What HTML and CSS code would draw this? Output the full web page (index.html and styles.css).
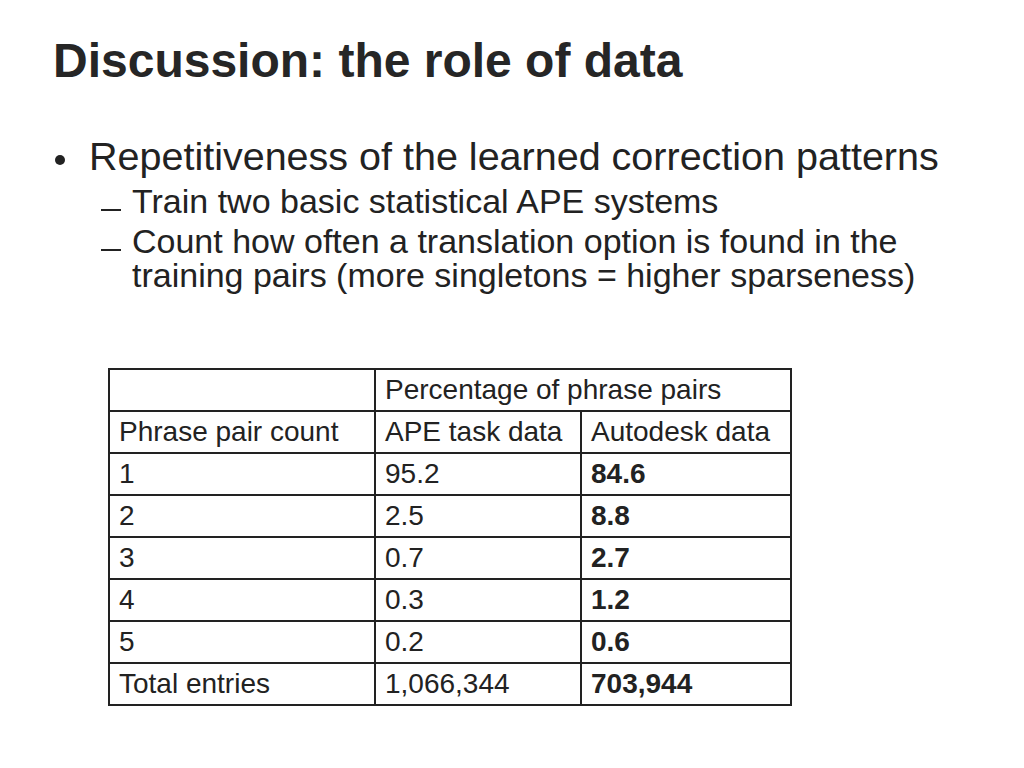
FILE: index.html
```html
<!DOCTYPE html>
<html>
<head>
<meta charset="utf-8">
<link rel="stylesheet" href="styles.css">
</head>
<body>
<div class="slide">
  <h1 class="title">Discussion: the role of data</h1>
  <ul class="bullets">
    <li class="item">
      <span class="dot"></span>
      <div class="item-body">
        <div class="item-text">Repetitiveness of the learned correction patterns</div>
        <ul class="subs">
          <li class="sub"><span class="dash"></span><span class="sub-text">Train two basic statistical APE systems</span></li>
          <li class="sub"><span class="dash"></span><span class="sub-text">Count how often a translation option is found in the training pairs (more singletons = higher sparseness)</span></li>
        </ul>
      </div>
    </li>
  </ul>
  <table class="data">
    <tr><td></td><td colspan="2">Percentage of phrase pairs</td></tr>
    <tr><td class="c1">Phrase pair count</td><td class="c2">APE task data</td><td class="c3">Autodesk data</td></tr>
    <tr><td>1</td><td>95.2</td><td class="b">84.6</td></tr>
    <tr><td>2</td><td>2.5</td><td class="b">8.8</td></tr>
    <tr><td>3</td><td>0.7</td><td class="b">2.7</td></tr>
    <tr><td>4</td><td>0.3</td><td class="b">1.2</td></tr>
    <tr><td>5</td><td>0.2</td><td class="b">0.6</td></tr>
    <tr><td>Total entries</td><td>1,066,344</td><td class="b">703,944</td></tr>
  </table>
</div>
</body>
</html>
```

FILE: styles.css
```css
html, body {
  margin: 0;
  padding: 0;
  background: #fff;
}
.slide {
  width: 1024px;
  height: 768px;
  box-sizing: border-box;
  padding: 33px 0 0 53px;
  font-family: "Liberation Sans", Arial, sans-serif;
  color: #222;
}
.title {
  margin: 0;
  font-size: 48px;
  font-weight: bold;
  line-height: 56px;
  color: #262626;
  white-space: nowrap;
}
.bullets {
  list-style: none;
  margin: 45px 0 0 0;
  padding: 0;
}
.item {
  display: flex;
}
.dot {
  flex: none;
  width: 10px;
  height: 10px;
  border-radius: 50%;
  background: #222;
  margin: 21px 24px 0 2px;
}
.item-text {
  font-size: 39.5px;
  line-height: 44px;
  white-space: nowrap;
}
.subs {
  list-style: none;
  margin: 0;
  padding: 0 0 0 12px;
}
.sub {
  display: flex;
  font-size: 34px;
  line-height: 34px;
  margin-top: 6px;
}
.dash {
  flex: none;
  width: 20px;
  height: 2px;
  background: #222;
  margin: 25px 11px 0 0;
}
.sub-text {
  width: 830px;
}
.data {
  border-collapse: collapse;
  margin: 76px 0 0 55px;
  font-size: 28px;
}
.data td {
  box-sizing: border-box;
  border: 2px solid #222;
  height: 42px;
  padding: 0 9px;
  line-height: 30px;
  vertical-align: middle;
  white-space: nowrap;
}
.data .c1 { width: 266px; }
.data .c2 { width: 206px; }
.data .c3 { width: 210px; }
.data .b { font-weight: bold; }
```
